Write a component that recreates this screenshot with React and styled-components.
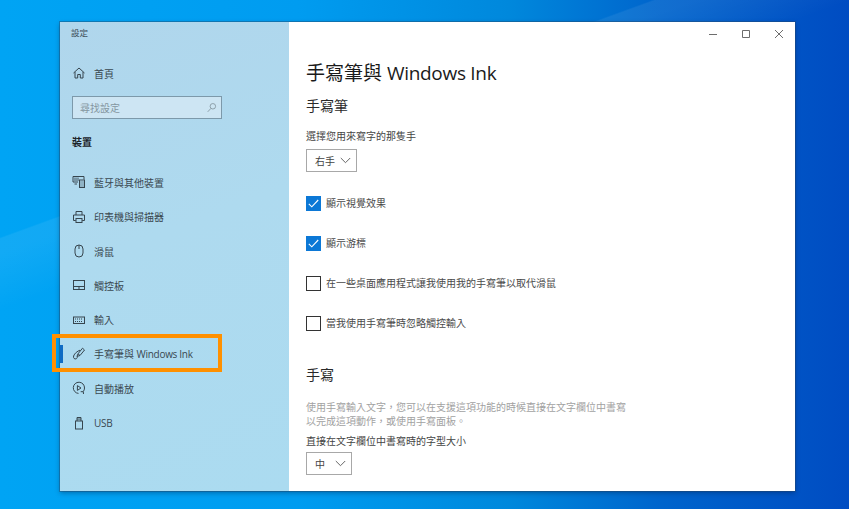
import React from 'react';
import styled, { createGlobalStyle } from 'styled-components';

const GlobalStyle = createGlobalStyle`
  html, body {
    margin: 0;
    height: 100%;
    overflow: hidden;
  }
  body {
    font-family: "Open Sans", "Noto Sans CJK TC", sans-serif;
  }
  #root {
    height: 100%;
  }
`;

const Desktop = styled.div.attrs({ lang: 'zh-TW' })`
  box-sizing: border-box;
  width: 849px;
  height: 509px;
  padding: 22px 54px 18px 60px;
  background:
    linear-gradient(160deg, transparent 0 29%, rgba(255, 255, 255, 0.07) 29.2% 31%, transparent 38%),
    linear-gradient(90deg, #00a4f4 0%, #009cf0 35%, #0088dc 60%, #0064cc 78%, #004cc2 100%);
`;

const Window = styled.div`
  display: flex;
  height: 100%;
  background: #fff;
  box-shadow: 0 0 0 1px rgba(40, 70, 100, 0.4), 0 2px 5px rgba(0, 30, 70, 0.4);
`;

const Sidebar = styled.aside`
  flex: 0 0 229px;
  display: flex;
  flex-direction: column;
  background: linear-gradient(160deg, #b0d6ec 0%, #aedaef 45%, #abdbf0 100%);
  color: #222c33;
`;

const AppTitle = styled.div`
  padding: 5px 0 0 11px;
  height: 24px;
  font-size: 8.5px;
  line-height: 12px;
  color: #3c4c56;
`;

const NavRow = styled.div`
  position: relative;
  display: flex;
  align-items: center;
  height: 34.3px;
  padding-left: 12px;
  font-size: 10px;
  color: #3a4850;
`;

const HomeRow = styled(NavRow)`
  margin-top: 5px;
`;

const IconSlot = styled.span`
  display: flex;
  justify-content: center;
  width: 14px;
  margin-right: 8px;
  color: #36454e;
`;

const Latin = styled.span`
  letter-spacing: -0.3px;
`;

const SearchBox = styled.div`
  box-sizing: border-box;
  display: flex;
  align-items: center;
  justify-content: space-between;
  width: 150px;
  height: 23px;
  margin: 6px 0 0 12px;
  padding: 0 3px 0 7px;
  border: 1.5px solid #7d99aa;
  background: #cde5f3;
  font-size: 10px;
  color: #84969f;
`;

const GroupTitle = styled.div`
  margin: 16px 0 16px 12px;
  height: 14px;
  font-size: 10px;
  line-height: 14px;
  font-weight: 700;
  color: #1a2228;
`;

const ActiveBar = styled.span`
  position: absolute;
  left: 0;
  top: 8px;
  width: 3px;
  height: 18px;
  background: #0f6cc4;
`;

const Highlight = styled.span`
  position: absolute;
  left: -8px;
  top: -3px;
  width: 170px;
  height: 38px;
  box-sizing: border-box;
  border: 4px solid #ff9000;
`;

const Content = styled.main`
  position: relative;
  flex: 1;
  padding: 38px 0 0 17px;
  color: #1d1d1d;
`;

const WindowControls = styled.div`
  position: absolute;
  top: 0;
  right: 0;
  display: flex;
`;

const ControlButton = styled.span`
  display: flex;
  align-items: center;
  justify-content: center;
  width: 33px;
  height: 23px;
  color: #6d6d6d;
`;

const PageTitle = styled.h1`
  margin: 0;
  font-size: 19px;
  line-height: 26px;
  font-weight: 400;
  color: #1a1a1a;
`;

const SectionTitle = styled.h2`
  margin: ${(p) => p.$top}px 0 0;
  font-size: 14px;
  line-height: 20px;
  font-weight: 400;
  color: #2a2a2a;
`;

const Label = styled.div`
  margin-top: ${(p) => p.$top}px;
  font-size: 10px;
  line-height: 14px;
  color: #444;
`;

const Select = styled.div`
  box-sizing: border-box;
  display: flex;
  align-items: center;
  justify-content: space-between;
  width: ${(p) => p.$width}px;
  height: 23px;
  margin-top: ${(p) => p.$top}px;
  padding: 0 5px 1px 8px;
  border: 1.5px solid #a8a8a8;
  font-size: 10px;
  color: #444;
`;

const CheckRow = styled.div`
  display: flex;
  align-items: center;
  height: 15px;
  margin-top: ${(p) => p.$top}px;
  font-size: 10px;
  color: #4a4a4a;
`;

const CheckLabel = styled.span`
  margin-top: -2px;
`;

const CheckBox = styled.span`
  box-sizing: border-box;
  display: flex;
  align-items: center;
  justify-content: center;
  flex: none;
  width: 15px;
  height: 15px;
  margin-right: 5px;
  border: ${(p) => (p.$checked ? 'none' : '1.5px solid #333')};
  background: ${(p) => (p.$checked ? '#0c78d6' : '#fff')};
`;

const HelpText = styled.p`
  margin: 15px 0 0;
  width: 340px;
  font-family: "Noto Sans CJK TC", sans-serif;
  font-size: 10px;
  line-height: 13.5px;
  color: #a2a2a2;
`;

const Stroke = ({ size = 14, children, width = 1 }) => (
  <svg width={size} height={size} viewBox="0 0 14 14" fill="none" stroke="currentColor" strokeWidth={width}>
    {children}
  </svg>
);

const HomeIcon = () => (
  <Stroke>
    <path d="M1.5 7 7 2l5.5 5M3 6v6h2.7V8.5h2.6V12H11V6" />
  </Stroke>
);

const DevicesIcon = () => (
  <Stroke>
    <path d="M12 4.5V1.5H1v5.5h5" />
    <rect x="2" y="2.5" width="5" height="3.5" fill="currentColor" stroke="none" opacity="0.45" />
    <rect x="7.5" y="5" width="5" height="7.5" />
    <path d="M8.5 7h3M8.5 9h3M8.5 11h3" strokeDasharray="1 1" />
    <path d="M2.5 9H5" />
  </Stroke>
);

const PrinterIcon = () => (
  <Stroke>
    <path d="M4 5V1.5h6V5M3.8 10.5H1.5V5h11v5.5h-2.3" />
    <rect x="4" y="8.5" width="6" height="4" />
  </Stroke>
);

const MouseIcon = () => (
  <Stroke>
    <rect x="3" y="1" width="8" height="12" rx="4" />
    <path d="M7 1v4" />
  </Stroke>
);

const TouchpadIcon = () => (
  <Stroke>
    <rect x="1.5" y="2.5" width="11" height="9" />
    <path d="M1.5 8.5h11M7 8.5v3" />
  </Stroke>
);

const KeyboardIcon = () => (
  <Stroke>
    <rect x="1.5" y="4" width="11" height="6.5" />
    <path d="M3 6h8M3 8.5h8" strokeDasharray="1 1" />
  </Stroke>
);

const PenIcon = () => (
  <Stroke>
    <path d="M10.5 1.2 12.5 3 8 8.5 6 6.8zM6 6.8 5 9.4l3-.9" />
    <path d="M8 3.2C5.5 4 2.5 6.4 1.6 9c-.6 2 1 3.6 2.6 2.8 1-.5 1.2-1.4 1-2.4" />
  </Stroke>
);

const AutoplayIcon = () => (
  <Stroke>
    <path d="M6.5 12.4A5.6 5.6 0 1 1 12.5 7c0 1.4-.4 2.5-1.2 3.5" />
    <path d="M5.4 4.6v4.8L9 7z" />
    <path d="M8.7 10.7h2.6l.2 2.3" />
  </Stroke>
);

const UsbIcon = () => (
  <Stroke>
    <rect x="3.5" y="5" width="7" height="8" />
    <path d="M5 5V1.5h4V5" />
    <path d="M5 3.2h4" strokeWidth="2" opacity="0.5" />
  </Stroke>
);

const SearchIcon = () => (
  <Stroke size={12}>
    <circle cx="8" cy="5" r="3.2" />
    <path d="M5.7 7.5 2 11.5" />
  </Stroke>
);

const Chevron = () => (
  <svg width="11" height="7" viewBox="0 0 11 7" fill="none" stroke="#666" strokeWidth="1">
    <path d="M.8 1 5.5 5.7 10.2 1" />
  </svg>
);

const Tick = () => (
  <svg width="11" height="9" viewBox="0 0 11 9" fill="none" stroke="#fff" strokeWidth="1.1">
    <path d="M.8 4.8 3.8 7.8 10.2 1" />
  </svg>
);

const navItems = [
  { id: 'bluetooth', label: '藍牙與其他裝置', icon: <DevicesIcon /> },
  { id: 'printers', label: '印表機與掃描器', icon: <PrinterIcon /> },
  { id: 'mouse', label: '滑鼠', icon: <MouseIcon /> },
  { id: 'touchpad', label: '觸控板', icon: <TouchpadIcon /> },
  { id: 'typing', label: '輸入', icon: <KeyboardIcon /> },
  { id: 'pen', label: '手寫筆與 ', latin: 'Windows Ink', icon: <PenIcon />, active: true },
  { id: 'autoplay', label: '自動播放', icon: <AutoplayIcon /> },
  { id: 'usb', latin: 'USB', icon: <UsbIcon /> },
];

export default function App() {
  return (
    <>
      <GlobalStyle />
      <Desktop>
        <Window>
          <Sidebar>
            <AppTitle>設定</AppTitle>
            <HomeRow>
              <IconSlot><HomeIcon /></IconSlot>
              首頁
            </HomeRow>
            <SearchBox>
              尋找設定
              <SearchIcon />
            </SearchBox>
            <GroupTitle>裝置</GroupTitle>
            {navItems.map((item) => (
              <NavRow key={item.id}>
                {item.active && <ActiveBar />}
                {item.active && <Highlight />}
                <IconSlot>{item.icon}</IconSlot>
                <span>
                  {item.label}
                  {item.latin && <Latin>{item.latin}</Latin>}
                </span>
              </NavRow>
            ))}
          </Sidebar>
          <Content>
            <WindowControls>
              <ControlButton>
                <svg width="10" height="10" viewBox="0 0 10 10" stroke="currentColor"><path d="M1 5.5h8" /></svg>
              </ControlButton>
              <ControlButton>
                <svg width="10" height="10" viewBox="0 0 10 10" fill="none" stroke="currentColor"><path d="M1.5 1.5h7v7h-7z" /></svg>
              </ControlButton>
              <ControlButton>
                <svg width="10" height="10" viewBox="0 0 10 10" stroke="currentColor"><path d="M1 1l8 8M9 1l-8 8" /></svg>
              </ControlButton>
            </WindowControls>
            <PageTitle>手寫筆與 <Latin>Windows Ink</Latin></PageTitle>
            <SectionTitle $top={10}>手寫筆</SectionTitle>
            <Label $top={13}>選擇您用來寫字的那隻手</Label>
            <Select $width={51} $top={6}>
              右手
              <Chevron />
            </Select>
            <CheckRow $top={24}>
              <CheckBox $checked><Tick /></CheckBox>
              <CheckLabel>顯示視覺效果</CheckLabel>
            </CheckRow>
            <CheckRow $top={25}>
              <CheckBox $checked><Tick /></CheckBox>
              <CheckLabel>顯示游標</CheckLabel>
            </CheckRow>
            <CheckRow $top={25}>
              <CheckBox />
              <CheckLabel>在一些桌面應用程式讓我使用我的手寫筆以取代滑鼠</CheckLabel>
            </CheckRow>
            <CheckRow $top={25}>
              <CheckBox />
              <CheckLabel>當我使用手寫筆時忽略觸控輸入</CheckLabel>
            </CheckRow>
            <SectionTitle $top={34}>手寫</SectionTitle>
            <HelpText>
              使用手寫輸入文字，您可以在支援這項功能的時候直接在文字欄位中書寫
              <br />
              以完成這項動作，或使用手寫面板。
            </HelpText>
            <Label $top={7}>直接在文字欄位中書寫時的字型大小</Label>
            <Select $width={46} $top={4}>
              中
              <Chevron />
            </Select>
          </Content>
        </Window>
      </Desktop>
    </>
  );
}
